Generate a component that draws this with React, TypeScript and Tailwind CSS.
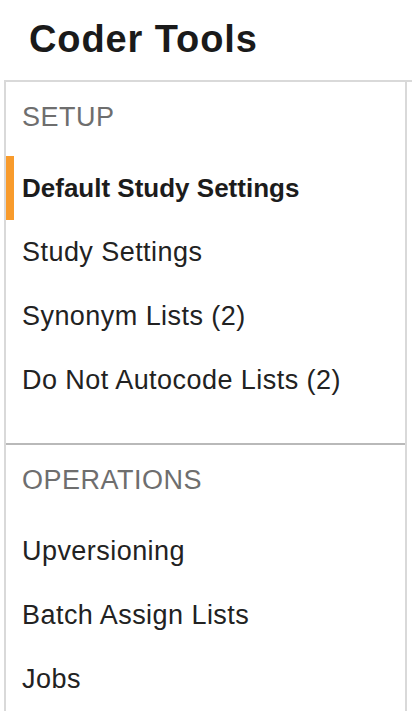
import React from 'react';

type Item = { label: string; active?: boolean };

const sections: { title: string; items: Item[] }[] = [
  {
    title: 'SETUP',
    items: [
      { label: 'Default Study Settings', active: true },
      { label: 'Study Settings' },
      { label: 'Synonym Lists (2)' },
      { label: 'Do Not Autocode Lists (2)' },
    ],
  },
  {
    title: 'OPERATIONS',
    items: [{ label: 'Upversioning' }, { label: 'Batch Assign Lists' }, { label: 'Jobs' }],
  },
];

const NavRow: React.FC<{ item: Item }> = ({ item }) => (
  <div
    className={`h-[64px] flex items-center border-l-[8px] pl-[8px] leading-[30px] ${
      item.active
        ? 'border-[#f89b2c] text-[26px] font-bold text-[#1c1c1c]'
        : 'border-transparent text-[27px] tracking-[0.45px] text-[#222]'
    }`}
  >
    {item.label}
  </div>
);

const App: React.FC = () => {
  return (
    <div className="w-[412px] h-[720px] overflow-hidden bg-white" style={{ fontFamily: '"Liberation Sans", Arial, sans-serif' }}>
      <h1 className="pt-[17px] pl-[29px] mb-[19px] text-[38px] leading-[44px] tracking-[0.9px] font-bold text-[#1a1a1a]">
        Coder Tools
      </h1>

      <div className="ml-[4px] border-l-2 border-t-2 border-[#d9d9d9]">
        <nav className="w-[401px] border-r-2 border-[#d9d9d9]">
          {sections.map((section, i) => (
            <div key={section.title} className={i > 0 ? 'border-t-2 border-[#b9b9b9]' : ''}>
              <div className="pt-[20px] pb-[24px] pl-[16px] text-[27px] leading-[30px] tracking-[0.5px] text-[#6e6e6e]">
                {section.title}
              </div>
              {section.items.map((item) => (
                <NavRow key={item.label} item={item} />
              ))}
              {i === 0 && <div className="h-[31px]" />}
            </div>
          ))}
        </nav>
      </div>
    </div>
  );
};

export default App;
